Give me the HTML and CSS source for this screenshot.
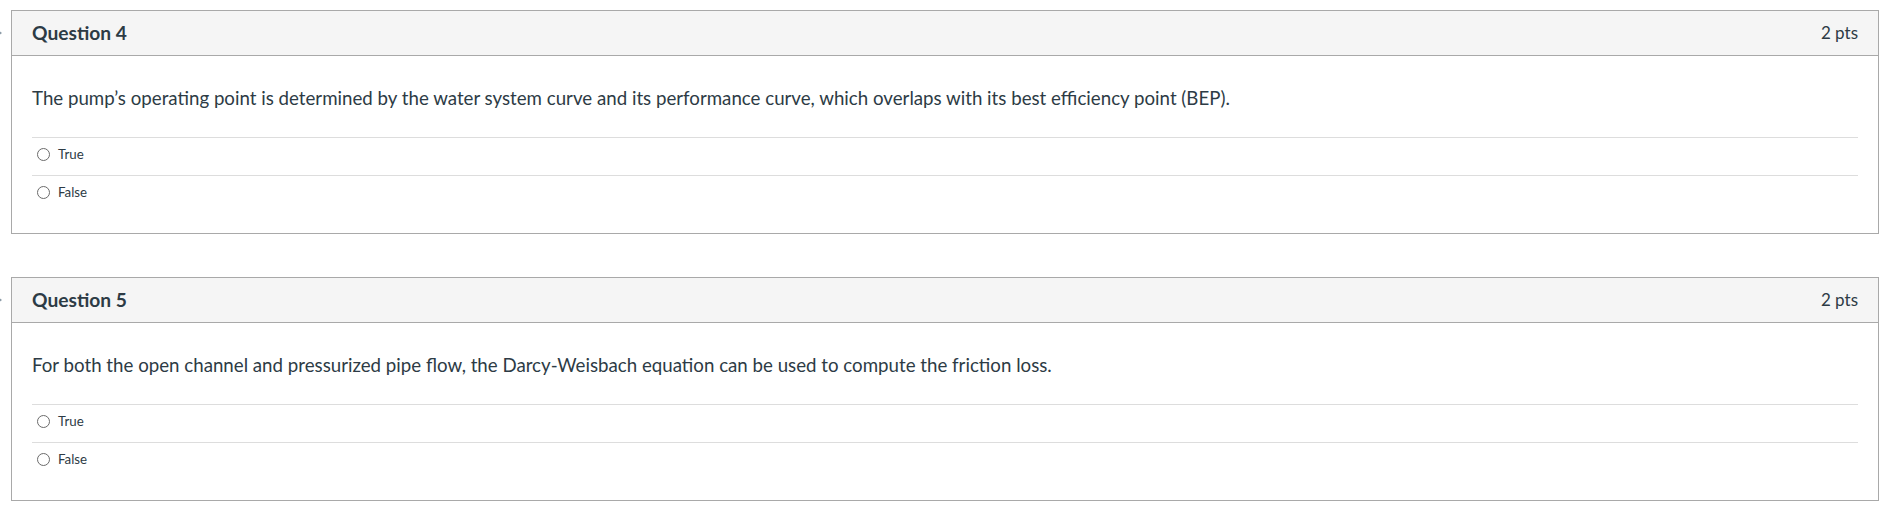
FILE: index.html
```html
<!DOCTYPE html>
<html>
<head>
<meta charset="utf-8">
<link rel="stylesheet" href="styles.css">
</head>
<body>
<div class="quiz">
  <div class="qwrap">
    <div class="gutter"><span class="marker"></span></div>
    <div class="question">
      <div class="qheader">
        <span class="qtitle">Question 4</span>
        <span class="qpts">2 pts</span>
      </div>
      <div class="qbody">
        <div class="qtext">The pump’s operating point is determined by the water system curve and its performance curve, which overlaps with its best efficiency point (BEP).</div>
        <div class="answers">
          <label class="answer"><span class="radio"></span><span class="alabel">True</span></label>
          <label class="answer"><span class="radio"></span><span class="alabel">False</span></label>
        </div>
      </div>
    </div>
  </div>
  <div class="qwrap">
    <div class="gutter"><span class="marker"></span></div>
    <div class="question">
      <div class="qheader">
        <span class="qtitle">Question 5</span>
        <span class="qpts">2 pts</span>
      </div>
      <div class="qbody">
        <div class="qtext">For both the open channel and pressurized pipe flow, the Darcy-Weisbach equation can be used to compute the friction loss.</div>
        <div class="answers">
          <label class="answer"><span class="radio"></span><span class="alabel">True</span></label>
          <label class="answer"><span class="radio"></span><span class="alabel">False</span></label>
        </div>
      </div>
    </div>
  </div>
</div>
</body>
</html>
```
FILE: styles.css
```css
html, body {
  margin: 0;
  padding: 0;
  background: #ffffff;
}
body {
  font-family: Lato, "Liberation Sans", sans-serif;
  color: #2d3b45;
}
.quiz {
  display: flex;
  flex-direction: column;
  gap: 43px;
  padding-top: 10px;
  width: 1879px;
}
.qwrap {
  display: flex;
  align-items: flex-start;
}
.gutter {
  width: 11px;
  flex: none;
  padding-top: 20px;
  overflow: hidden;
}
.marker {
  display: block;
  width: 0;
  height: 0;
  margin-left: -2px;
  border-top: 3px solid transparent;
  border-bottom: 3px solid transparent;
  border-left: 4px solid #8a9aa6;
}
.question {
  flex: 1;
  border: 1px solid #a9a9a9;
}
.qheader {
  display: flex;
  justify-content: space-between;
  align-items: center;
  height: 42px;
  padding: 0 20px 2px;
  background: #f5f5f5;
  border-bottom: 1px solid #a9a9a9;
}
.qtitle {
  font-weight: 700;
  font-size: 19.2px;
}
.qpts {
  font-size: 17px;
}
.qbody {
  padding: 31px 20px 20px;
}
.qtext {
  font-size: 18.7px;
  line-height: 22px;
  margin-bottom: 28px;
}
.answers {
  display: flex;
  flex-direction: column;
}
.answer {
  display: flex;
  align-items: flex-start;
  height: 29px;
  padding-top: 8px;
  border-top: 1px solid #dddddd;
  font-size: 13.3px;
}
.radio {
  width: 11px;
  height: 11px;
  margin-top: 2px;
  border: 1px solid #6b6b6b;
  border-radius: 50%;
  margin-left: 5px;
  margin-right: 8px;
  flex: none;
}
.alabel {
  line-height: 16px;
}
```
